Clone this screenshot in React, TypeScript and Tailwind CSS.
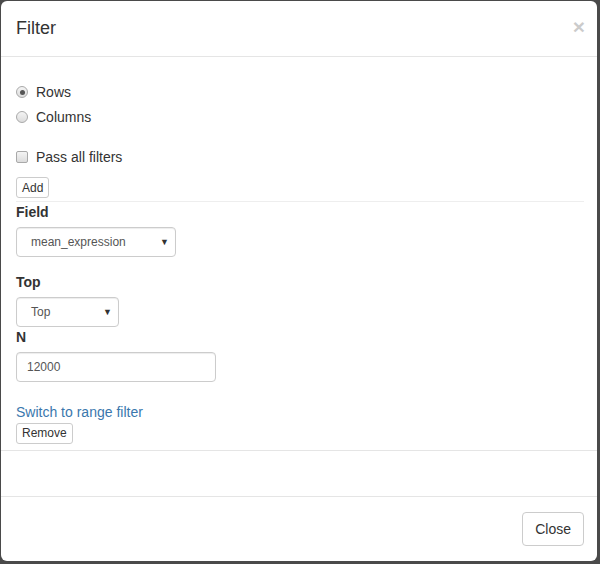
import React, { useState } from 'react';

const font = { fontFamily: '"Liberation Sans", Arial, sans-serif' };

const Radio = ({ checked, label, onClick }: { checked: boolean; label: string; onClick: () => void }) => (
    <label onClick={onClick} className="flex items-center h-5 cursor-pointer">
        <span className="w-[12px] h-[12px] rounded-full border border-[#a9a9a9] bg-gradient-to-b from-[#f4f4f4] to-[#dcdcdc] flex items-center justify-center">
            {checked && <span className="w-[5px] h-[5px] rounded-full bg-[#555]" />}
        </span>
        <span className="ml-[8px]">{label}</span>
    </label>
);

const SelectBox = ({ value, width }: { value: string; width: string }) => (
    <div className={`relative h-[30px] ${width} border border-[#ccc] rounded-[4px] bg-white flex items-center shadow-[inset_0_1px_1px_rgba(0,0,0,0.075)]`}>
        <span className="pl-[14px] text-[12px] text-[#555]">{value}</span>
        <span className="absolute right-[6px] top-[8px] text-[9px] text-[#333]">▼</span>
    </div>
);

export default function App() {
    const [axis, setAxis] = useState('rows');
    const [passAll, setPassAll] = useState(false);

    return (
        <div className="w-[600px] h-[564px] bg-[#4a4a4a] pt-[1px] pl-[1px] text-[14px] text-[#333]" style={font}>
            <div className="w-[596px] h-[560px] bg-white rounded-[6px] flex flex-col overflow-hidden">
                {/* ---------- header ---------- */}
                <div className="h-[56px] border-b border-[#e5e5e5] pl-[15px] pr-[12px] flex items-center justify-between">
                    <h4 className="text-[18px] leading-none pb-[1px]">Filter</h4>
                    <button className="text-[21px] font-bold leading-none text-black opacity-20 -mt-[4px]">×</button>
                </div>

                {/* ---------- body ---------- */}
                <div className="pl-[15px] pr-[13px] pt-[25px]">
                    <Radio checked={axis === 'rows'} label="Rows" onClick={() => setAxis('rows')} />
                    <div className="mt-[5px]">
                        <Radio checked={axis === 'columns'} label="Columns" onClick={() => setAxis('columns')} />
                    </div>

                    <label className="mt-[20px] flex items-center h-5 cursor-pointer" onClick={() => setPassAll(!passAll)}>
                        <span className="w-[12px] h-[12px] rounded-[2px] border border-[#a9a9a9] bg-gradient-to-b from-[#f4f4f4] to-[#dcdcdc] flex items-center justify-center text-[9px] leading-none">
                            {passAll && '✓'}
                        </span>
                        <span className="ml-[8px]">Pass all filters</span>
                    </label>

                    <button className="mt-[10px] h-[21px] px-[5px] text-[12px] border border-[#ccc] rounded-[3px] bg-white">Add</button>
                    <div className="mt-[3px] border-t border-[#eee]" />

                    <div className="font-bold h-5 leading-5">Field</div>
                    <div className="mt-[5px]">
                        <SelectBox value="mean_expression" width="w-[160px]" />
                    </div>

                    <div className="font-bold h-5 leading-5 mt-[15px]">Top</div>
                    <div className="mt-[5px]">
                        <SelectBox value="Top" width="w-[103px]" />
                    </div>

                    <div className="font-bold h-5 leading-5">N</div>
                    <div className="mt-[5px] w-[200px] h-[30px] border border-[#ccc] rounded-[4px] flex items-center px-[10px] text-[12px] text-[#555] shadow-[inset_0_1px_1px_rgba(0,0,0,0.075)]">
                        12000
                    </div>

                    <a className="block mt-[20px] h-5 leading-5 text-[#3a77ad] cursor-pointer">Switch to range filter</a>
                    <button className="h-[21px] px-[5px] text-[12px] border border-[#ccc] rounded-[3px] bg-white">Remove</button>
                </div>

                <div className="mt-[6px] h-[46px] border-t border-[#e5e5e5]" />

                {/* ---------- footer ---------- */}
                <div className="flex-1 border-t border-[#e5e5e5] px-[13px] pt-[1px] flex items-center justify-end">
                    <button className="h-[34px] px-[12px] border border-[#ccc] rounded-[4px] bg-white text-[14px] text-[#333]">Close</button>
                </div>
            </div>
        </div>
    );
}
